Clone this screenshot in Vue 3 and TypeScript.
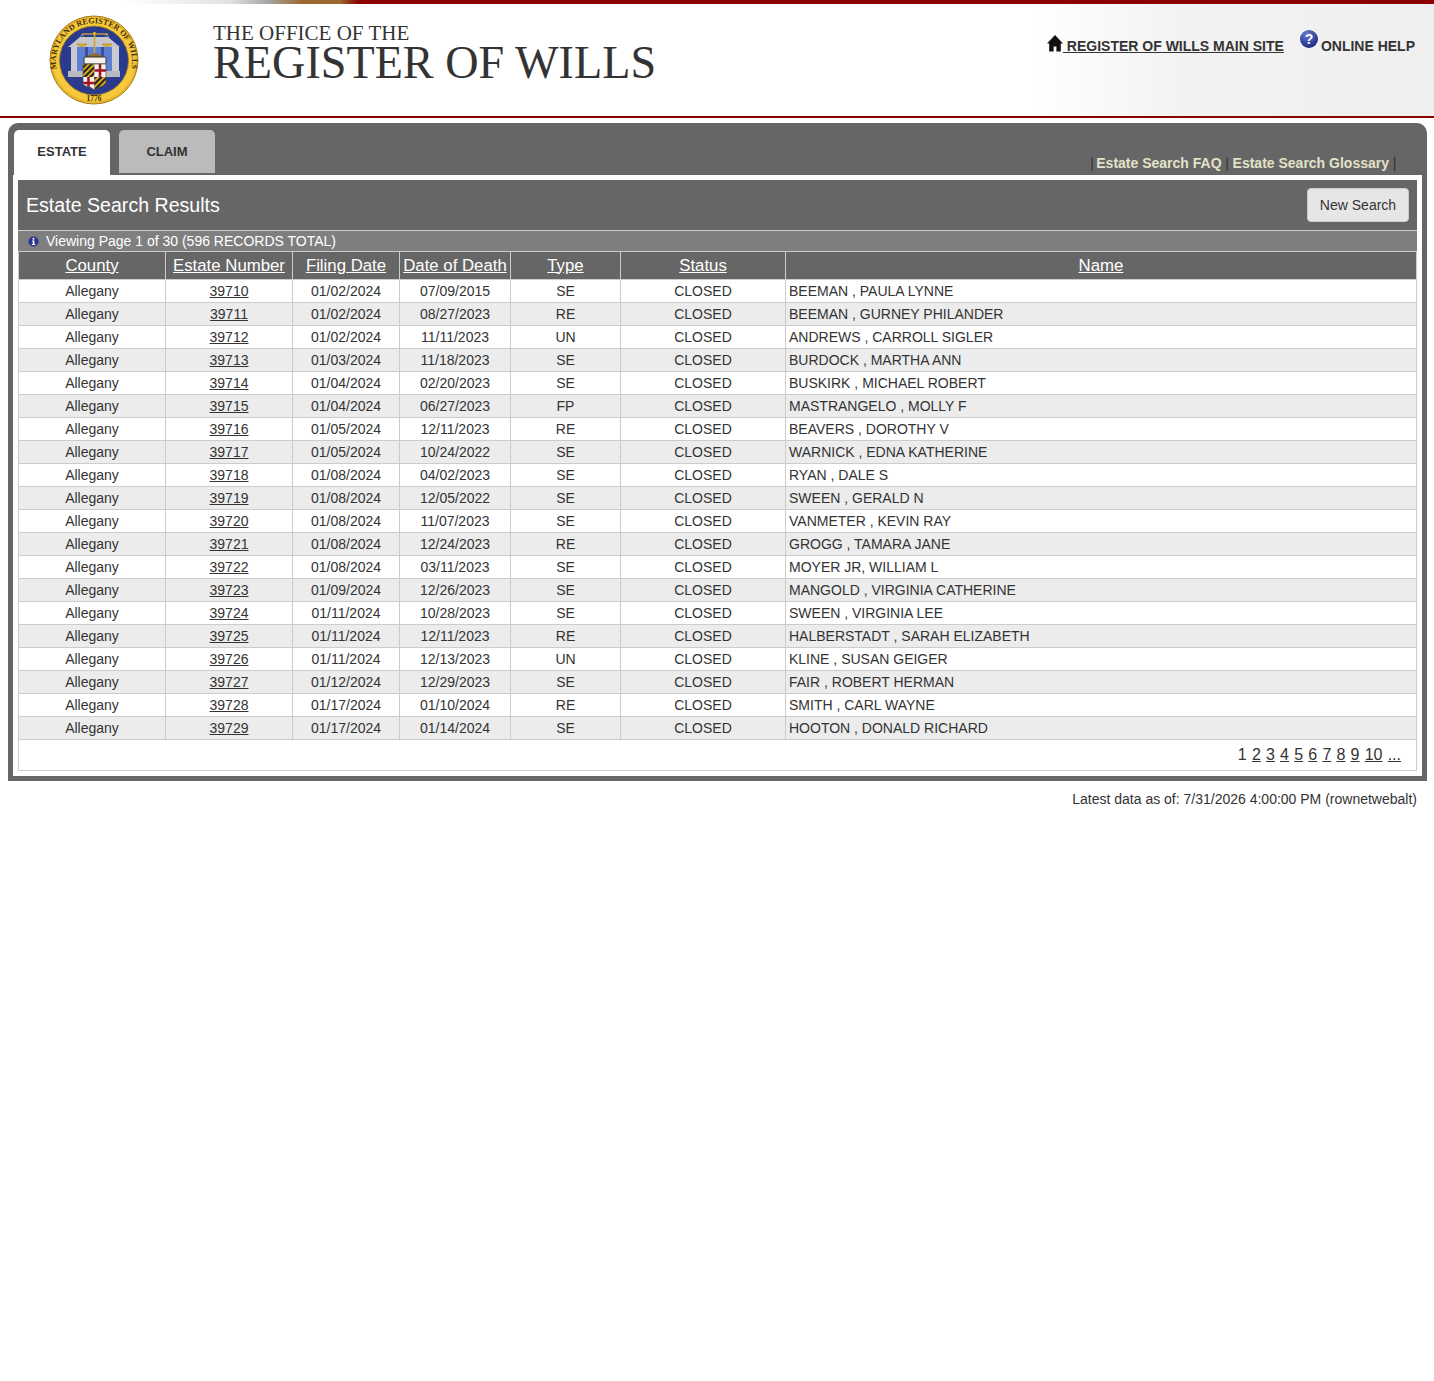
<script setup lang="ts">
interface Row { num: number; filed: string; death: string; type: string; name: string }
const raw: [string, string, string, string][] = [
  ['01/02/2024', '07/09/2015', 'SE', 'BEEMAN , PAULA LYNNE'],
  ['01/02/2024', '08/27/2023', 'RE', 'BEEMAN , GURNEY PHILANDER'],
  ['01/02/2024', '11/11/2023', 'UN', 'ANDREWS , CARROLL SIGLER'],
  ['01/03/2024', '11/18/2023', 'SE', 'BURDOCK , MARTHA ANN'],
  ['01/04/2024', '02/20/2023', 'SE', 'BUSKIRK , MICHAEL ROBERT'],
  ['01/04/2024', '06/27/2023', 'FP', 'MASTRANGELO , MOLLY F'],
  ['01/05/2024', '12/11/2023', 'RE', 'BEAVERS , DOROTHY V'],
  ['01/05/2024', '10/24/2022', 'SE', 'WARNICK , EDNA KATHERINE'],
  ['01/08/2024', '04/02/2023', 'SE', 'RYAN , DALE S'],
  ['01/08/2024', '12/05/2022', 'SE', 'SWEEN , GERALD N'],
  ['01/08/2024', '11/07/2023', 'SE', 'VANMETER , KEVIN RAY'],
  ['01/08/2024', '12/24/2023', 'RE', 'GROGG , TAMARA JANE'],
  ['01/08/2024', '03/11/2023', 'SE', 'MOYER JR, WILLIAM L'],
  ['01/09/2024', '12/26/2023', 'SE', 'MANGOLD , VIRGINIA CATHERINE'],
  ['01/11/2024', '10/28/2023', 'SE', 'SWEEN , VIRGINIA LEE'],
  ['01/11/2024', '12/11/2023', 'RE', 'HALBERSTADT , SARAH ELIZABETH'],
  ['01/11/2024', '12/13/2023', 'UN', 'KLINE , SUSAN GEIGER'],
  ['01/12/2024', '12/29/2023', 'SE', 'FAIR , ROBERT HERMAN'],
  ['01/17/2024', '01/10/2024', 'RE', 'SMITH , CARL WAYNE'],
  ['01/17/2024', '01/14/2024', 'SE', 'HOOTON , DONALD RICHARD'],
]
const rows: Row[] = raw.map((r, i) => ({ num: 39710 + i, filed: r[0], death: r[1], type: r[2], name: r[3] }))
const heads = ['County', 'Estate Number', 'Filing Date', 'Date of Death', 'Type', 'Status', 'Name']
const pages = ['2', '3', '4', '5', '6', '7', '8', '9', '10', '...']
</script>

<template>
  <div class="page">
    <header class="top">
      <div class="stripe"></div>
      <div class="brand">
        <svg class="seal" viewBox="0 0 90 90" width="90" height="90" role="img" aria-label="Seal">
          <defs>
            <path id="arc" d="M7.6 53 A38 38 0 1 1 82.4 53" />
            <clipPath id="shield"><path d="M34 49 H57 V68 Q57 71 50 72 L45.5 75 L41 72 Q34 71 34 68 Z" /></clipPath>
            <pattern id="calvert" width="4" height="4" patternUnits="userSpaceOnUse" patternTransform="rotate(45)">
              <rect width="4" height="4" fill="#d9a91f" />
              <rect width="2" height="4" fill="#222" />
            </pattern>
          </defs>
          <circle cx="45" cy="45" r="44" fill="#e8b52c" stroke="#a57f1b" stroke-width="1" />
          <circle cx="45" cy="45" r="41.5" fill="#f6c93c" />
          <circle cx="45" cy="45.5" r="34.5" fill="#2a3a8c" stroke="#a57f1b" stroke-width="0.8" />
          <text class="seal-text"><textPath href="#arc" startOffset="50%" text-anchor="middle">MARYLAND REGISTER OF WILLS</textPath></text>
          <text x="45" y="86" class="seal-year" text-anchor="middle">1776</text>
          <rect x="28" y="32" width="35" height="24" fill="#5f80d2" />
          <rect x="36" y="32" width="3" height="24" fill="#3b4ea6" />
          <rect x="52" y="32" width="3" height="24" fill="#3b4ea6" />
          <path d="M19 32 L31 22 H59 L71 32 Z" fill="#c4c6cc" />
          <rect x="22" y="32" width="6" height="24" fill="#c9cbd0" />
          <rect x="63" y="32" width="7" height="24" fill="#c9cbd0" />
          <rect x="19" y="56" width="52" height="6" fill="#b8bac0" />
          <path d="M33 19 H59" stroke="#c9a33c" stroke-width="1.4" />
          <path d="M45.5 17 V38" stroke="#c9a33c" stroke-width="1.6" />
          <circle cx="45.5" cy="18.5" r="1.4" fill="#e0b52e" />
          <path d="M28 29 Q33 34 38 29 Z M53 29 Q58 34 63 29 Z" fill="#e0b52e" stroke="#a57f1b" stroke-width=".6" />
          <path d="M33 19 L28 29 M33 19 L38 29 M58 19 L53 29 M58 19 L63 29" stroke="#d9d2b0" stroke-width=".5" />
          <path d="M37 42 Q45 35 55 42 Z" fill="#96682d" />
          <rect x="35" y="42" width="22" height="7" rx="1.5" fill="#f2f2ea" stroke="#333" stroke-width="1" />
          <g clip-path="url(#shield)">
            <rect x="34" y="49" width="11.5" height="13" fill="url(#calvert)" />
            <rect x="45.5" y="49" width="11.5" height="13" fill="#f3f0ee" />
            <path d="M51 49 V62 M45.5 55.5 H57" stroke="#a31621" stroke-width="2.6" />
            <rect x="34" y="62" width="11.5" height="14" fill="#f3f0ee" />
            <path d="M39.5 62 V76 M34 68 H45.5" stroke="#a31621" stroke-width="2.6" />
            <rect x="45.5" y="62" width="11.5" height="14" fill="url(#calvert)" />
          </g>
          <path d="M34 49 H57 V68 Q57 71 50 72 L45.5 75 L41 72 Q34 71 34 68 Z" fill="none" stroke="#555" stroke-width=".7" />
        </svg>
        <div class="titles">
          <div class="office">THE OFFICE OF THE</div>
          <div class="register">REGISTER OF WILLS</div>
        </div>
      </div>
      <nav class="toplinks">
        <a class="main-link" href="#">
          <svg class="home" viewBox="0 0 16 17" width="16" height="17"><path d="M8 0 L16 8.4 H13.8 V16.4 H9.4 V11.4 H6.6 V16.4 H2.2 V8.4 H0 Z" fill="#111" /></svg>
          <span> REGISTER OF WILLS MAIN SITE</span>
        </a>
        <span class="help">
          <svg class="qmark" viewBox="0 0 18 18" width="18" height="18">
            <defs><radialGradient id="qg" cx="40%" cy="25%" r="75%"><stop offset="0" stop-color="#6a7cd4" /><stop offset="1" stop-color="#1c2a80" /></radialGradient></defs>
            <circle cx="9" cy="9" r="9" fill="url(#qg)" />
            <text x="9" y="14" class="qtext" text-anchor="middle">?</text>
          </svg>
          <span>ONLINE HELP</span>
        </span>
      </nav>
    </header>

    <main class="panel">
      <div class="tabbar">
        <div class="tabs">
          <div class="tab active">ESTATE</div>
          <div class="tab">CLAIM</div>
        </div>
        <div class="sublinks">
          <span class="sep first">|</span><b>Estate Search FAQ</b><span class="sep">|</span><b>Estate Search Glossary</b><span class="sep">|</span>
        </div>
      </div>
      <div class="sheet">
        <div class="titlebar">
          <h1>Estate Search Results</h1>
          <button class="newsearch" type="button">New Search</button>
        </div>
        <div class="infobar">
          <svg class="info" viewBox="0 0 12 12" width="11" height="11">
            <circle cx="6" cy="6" r="5.5" fill="#27358c" />
            <circle cx="6" cy="3" r="1.2" fill="#fff" />
            <path d="M4.4 5 H7 V8.6 H8 V9.8 H4.2 V8.6 H5.2 V6.1 H4.4 Z" fill="#fff" />
          </svg>
          <span>Viewing Page 1 of 30 (596 RECORDS TOTAL)</span>
        </div>
        <table class="results">
          <colgroup>
            <col class="c1" /><col class="c2" /><col class="c3" /><col class="c4" /><col class="c5" /><col class="c6" /><col />
          </colgroup>
          <thead>
            <tr><th v-for="h in heads" :key="h"><a href="#">{{ h }}</a></th></tr>
          </thead>
          <tbody>
            <tr v-for="(r, i) in rows" :key="r.num" :class="{ alt: i % 2 === 1 }">
              <td>Allegany</td>
              <td><a href="#">{{ r.num }}</a></td>
              <td>{{ r.filed }}</td>
              <td>{{ r.death }}</td>
              <td>{{ r.type }}</td>
              <td>CLOSED</td>
              <td class="name">{{ r.name }}</td>
            </tr>
          </tbody>
        </table>
        <div class="pager">
          <span>1</span>
          <a v-for="p in pages" :key="p" href="#">{{ p }}</a>
        </div>
      </div>
    </main>
    <div class="latest">Latest data as of: 7/31/2026 4:00:00 PM (rownetwebalt)</div>
  </div>
</template>

<style scoped>
.page {
  font-family: "Liberation Sans", Arial, sans-serif;
  color: #333;
  width: 1434px;
  min-height: 1381px;
  background: #fff;
}
.top {
  position: relative;
  height: 118px;
  box-sizing: border-box;
  border-bottom: 2px solid #8b0000;
  padding-top: 4px;
  display: flex;
  justify-content: space-between;
  background: linear-gradient(90deg, #fff 72%, #f3f3f3 82%, #efefef 100%);
}
.stripe {
  position: absolute;
  left: 0;
  right: 0;
  top: 0;
  height: 4px;
  background: linear-gradient(90deg, #fff 8.7%, #e2e2e0 16%, #aaa 18.5%, #9a6a30 21%, #9a6a30 23.7%, #8b0000 25%, #8b0000 100%);
}
.brand {
  display: flex;
  align-items: flex-start;
  padding-left: 49px;
}
.seal {
  margin-top: 11px;
  flex: none;
}
.seal-text {
  font-family: "Liberation Serif", serif;
  font-size: 8px;
  font-weight: bold;
  fill: #3e2c06;
  letter-spacing: 0.1px;
}
.seal-year {
  font-family: "Liberation Serif", serif;
  font-size: 7.5px;
  font-weight: bold;
  fill: #3e2c06;
}
.titles {
  margin-left: 74px;
  font-family: "Liberation Serif", "Times New Roman", serif;
  color: #333;
}
.office {
  margin-top: 17px;
  font-size: 21px;
  line-height: 25px;
}
.register {
  font-size: 46.2px;
  line-height: 44px;
  margin-top: -5px;
}
.toplinks {
  display: flex;
  align-items: flex-start;
  gap: 16px;
  padding: 26px 19px 0 0;
  font-size: 14px;
  font-weight: bold;
  color: #333;
}
.main-link {
  color: #333;
  display: flex;
  align-items: flex-start;
  padding-top: 5px;
  text-decoration: underline;
  white-space: pre;
}
.main-link span {
  margin-top: 3px;
}
.home {
  flex: none;
}
.help {
  display: flex;
  align-items: flex-start;
  gap: 3px;
}
.help span {
  margin-top: 8px;
}
.qtext {
  font-family: "Liberation Sans", sans-serif;
  font-size: 14px;
  font-weight: bold;
  fill: #fff;
}
.panel {
  margin: 5px 7px 0 8px;
  background: #666;
  border-radius: 10px 10px 0 0;
  padding: 7px 5px 5px;
}
.tabbar {
  height: 45px;
  display: flex;
  justify-content: space-between;
  align-items: flex-end;
}
.tabs {
  display: flex;
  gap: 9px;
  padding-left: 1px;
  align-items: flex-start;
}
.tab {
  width: 96px;
  height: 43px;
  background: #bbb;
  border-radius: 5px 5px 0 0;
  font-size: 13px;
  font-weight: bold;
  color: #333;
  text-align: center;
  line-height: 43px;
}
.tab.active {
  background: #fff;
  height: 45px;
}
.sublinks {
  font-size: 14px;
  color: #333;
  padding-right: 22px;
  line-height: 16px;
  padding-bottom: 4px;
}
.sublinks b {
  color: #e2e2c8;
}
.sep {
  margin: 0 3.7px;
  font-weight: normal;
}
.sep.first {
  margin: 0 2.4px 0 0;
}
.sheet {
  background: #fff;
  padding: 5px 5px 5px;
}
.titlebar {
  height: 50px;
  background: #666;
  border-bottom: 1px solid #ccc;
  display: flex;
  align-items: center;
  justify-content: space-between;
  padding: 0 8px;
}
h1 {
  margin: 0;
  font-size: 19.6px;
  font-weight: normal;
  color: #fff;
}
.newsearch {
  width: 102px;
  height: 34px;
  padding: 0;
  background: #e6e6e6;
  border: 1px solid #ccc;
  border-radius: 4px;
  color: #333;
  font-family: inherit;
  font-size: 14px;
}
.infobar {
  height: 20px;
  background: #7f7f7f;
  border-bottom: 1px solid #ccc;
  display: flex;
  align-items: center;
  padding-left: 10px;
  gap: 7px;
  font-size: 14px;
  color: #fff;
}
.info {
  flex: none;
}
.results {
  width: 1399px;
  table-layout: fixed;
  border-collapse: collapse;
  font-size: 14px;
}
.c1 { width: 147px; }
.c2 { width: 127px; }
.c3 { width: 107px; }
.c4 { width: 111px; }
.c5 { width: 110px; }
.c6 { width: 165px; }
th {
  height: 27px;
  padding: 0;
  background: #666;
  border: 1px solid #ccc;
  border-top: 0;
  font-size: 16.8px;
  font-weight: normal;
}
th a {
  color: #fff;
}
td {
  height: 22px;
  padding: 0;
  text-align: center;
  border: 1px solid #ccc;
  color: #333;
  line-height: 16px;
}
tr.alt td {
  background: #ececec;
}
td a {
  color: #333;
}
td.name {
  text-align: left;
  padding-left: 3px;
}
.pager {
  height: 31px;
  box-sizing: border-box;
  border: 1px solid #ccc;
  border-top: 0;
  display: flex;
  justify-content: flex-end;
  gap: 5.2px;
  padding: 5px 15px 0 0;
  font-size: 16px;
  line-height: 19px;
  color: #333;
}
.pager a {
  color: #333;
}
.latest {
  padding: 10px 17px 0 0;
  text-align: right;
  font-size: 14px;
  line-height: 16px;
  color: #333;
}
</style>

<style>
html, body { margin: 0; background: #fff; }
</style>
